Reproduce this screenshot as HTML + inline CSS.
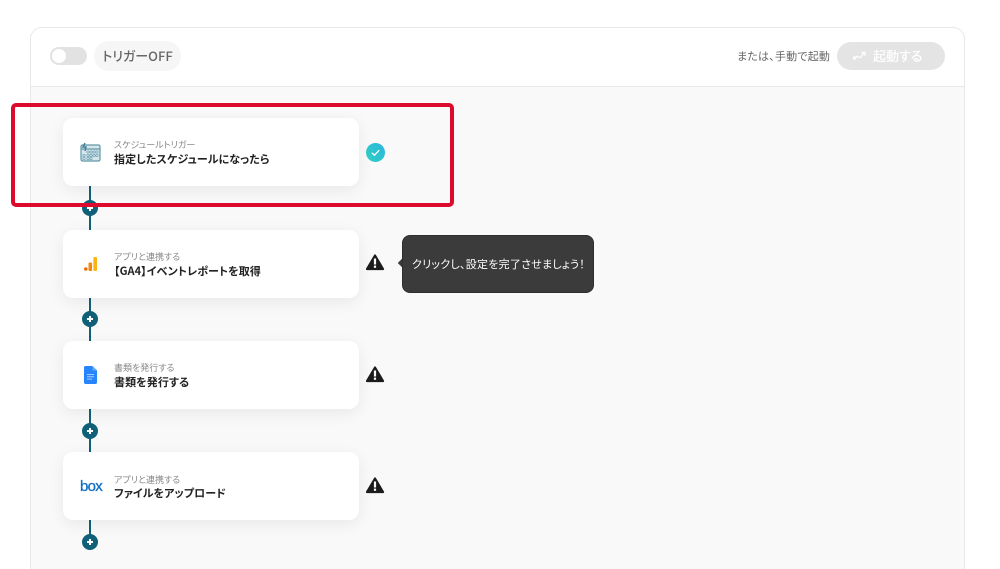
<!DOCTYPE html>
<html lang="ja">
<head>
<meta charset="utf-8">
<title>Flow</title>
<style>
*{box-sizing:border-box;margin:0;padding:0}
html,body{width:1000px;height:569px;overflow:hidden;background:#fff}
body{position:relative;font-family:"Noto Sans CJK JP","Liberation Sans",sans-serif;font-feature-settings:"palt"}
.abs{position:absolute}
.panel{left:30px;top:27px;width:935px;height:560px;border:1px solid #e8e8e8;border-radius:12px;background:#f9f9f9;overflow:hidden}
.head{left:0;top:0;width:933px;height:59px;background:#fff;border-bottom:1px solid #e8e8e8}
.toggle{left:50px;top:47px;width:37px;height:18px;border-radius:9px;background:#e2e2e2}
.knob{left:52px;top:49px;width:14px;height:14px;border-radius:50%;background:#fff}
.chip{left:94px;top:41px;width:87px;height:30px;border-radius:15px;background:#f6f6f6;color:#666;font-size:13px;font-weight:500;line-height:30px;text-align:center;white-space:nowrap}
.manual{left:737px;top:47px;font-size:11px;letter-spacing:.2px;line-height:18px;color:#666;white-space:nowrap}
.btn{left:837px;top:42px;width:108px;height:28px;border-radius:14px;background:#e4e4e4}
.btnt{left:873px;top:47px;font-size:13px;line-height:18px;color:#fff;font-weight:500;white-space:nowrap}
.line{left:89px;width:2px;background:#0f6078}
.plus{left:82px;width:16px;height:16px;border-radius:50%;background:#0f6078}
.plus:before{content:"";position:absolute;left:5px;top:7.250px;width:6px;height:1.500px;background:#fff}
.plus:after{content:"";position:absolute;left:7.250px;top:5px;width:1.500px;height:6px;background:#fff}
.card{left:63px;width:296px;height:68px;border-radius:10px;background:#fff;box-shadow:0 4px 16px rgba(0,0,0,.07)}
.sub{left:114px;font-size:9px;line-height:12px;color:#888;white-space:nowrap;margin-top:.5px}
.title{left:114px;font-size:11px;letter-spacing:.08px;line-height:16px;color:#222;font-weight:700;white-space:nowrap}
.red{left:11px;top:103px;width:443px;height:104px;border:4px solid #dc0a2d;border-radius:5px}
.tip{left:402px;top:235px;width:192px;height:58px;border-radius:8px;background:#3b3b3b;color:#fff;font-size:11px;letter-spacing:.25px;line-height:56px;padding-left:9px;white-space:nowrap;border:1px solid #2e2e2e}
.arrow{left:399px;top:260px;width:6px;height:6px;background:#3b3b3b;transform:rotate(45deg)}
.box{left:80px;top:477px;font-family:"Liberation Sans",sans-serif;font-size:15px;line-height:20px;color:#0f6fc6;letter-spacing:-.7px;-webkit-text-stroke:.3px #0f6fc6;white-space:nowrap}
</style>
</head>
<body>
<div class="abs panel"><div class="abs head"></div></div>

<div class="abs toggle"></div><div class="abs knob"></div>
<div class="abs chip">トリガーOFF</div>
<div class="abs manual">または、手動で起動</div>
<div class="abs btn"></div>
<svg class="abs" style="left:852px;top:49px" width="15" height="13" viewBox="0 0 15 13" fill="none" stroke="#fff" stroke-width="1.2"><circle cx="2.500" cy="9" r="1.200"/><path d="M4 8.500C6 5.500 7 10.500 9 8L12 4"/><path d="M9.500 3.500H13V7"/></svg>
<div class="abs btnt">起動する</div>

<div class="abs line" style="top:186px;height:44px"></div>
<div class="abs line" style="top:297px;height:44px"></div>
<div class="abs line" style="top:409px;height:44px"></div>
<div class="abs line" style="top:520px;height:20px"></div>
<div class="abs plus" style="top:200px"></div>
<div class="abs plus" style="top:311px"></div>
<div class="abs plus" style="top:423px"></div>
<div class="abs plus" style="top:534px"></div>

<div class="abs card" style="top:118px"></div>
<div class="abs card" style="top:230px"></div>
<div class="abs card" style="top:341px"></div>
<div class="abs card" style="top:452px"></div>

<svg class="abs" style="left:80px;top:142px" width="21" height="20" viewBox="0 0 21 20" fill="none">
<rect x="1" y="3" width="19" height="16" rx="1.500" fill="#d6e6eb" stroke="#5f97a8" stroke-width="1.200"/>
<path d="M1 7H20" stroke="#5f97a8" stroke-width="1.200"/>
<path d="M5 1L3 5H6L5 9" stroke="#3d7f93" stroke-width="1.400"/>
<g fill="none" stroke="#6fa2b2" stroke-width=".7"><circle cx="8" cy="10" r="1.200"/><circle cx="11" cy="10" r="1.200"/><circle cx="14" cy="10" r="1.200"/><circle cx="17" cy="10" r="1.200"/><circle cx="4" cy="13.500" r="1.200"/><circle cx="8" cy="13.500" r="1.200"/><circle cx="11" cy="13.500" r="1.200"/><circle cx="14" cy="13.500" r="1.200"/><circle cx="17" cy="13.500" r="1.200"/><circle cx="4" cy="16.500" r="1.200"/><circle cx="8" cy="16.500" r="1.200"/><circle cx="11" cy="16.500" r="1.200"/></g>
</svg>
<div class="abs sub" style="top:138px">スケジュールトリガー</div>
<div class="abs title" style="top:151px">指定したスケジュールになったら</div>

<svg class="abs" style="left:84px;top:257px" width="13" height="14" viewBox="0 0 13 14">
<circle cx="1.800" cy="12" r="1.800" fill="#e8710a"/>
<rect x="4.500" y="5.500" width="3.600" height="8.500" rx="1" fill="#ee8a10"/>
<rect x="9.400" y="0" width="3.600" height="14" rx="1" fill="#fbb416"/>
</svg>
<div class="abs sub" style="top:250px">アプリと連携する</div>
<div class="abs title" style="top:263px">【GA4】イベントレポートを取得</div>

<svg class="abs" style="left:84px;top:366px" width="13" height="18" viewBox="0 0 13 18">
<path d="M1.500 0H8.500L13 4.500V16.500C13 17.300 12.300 18 11.500 18H1.500C.7 18 0 17.300 0 16.500V1.500C0 .7.7 0 1.500 0Z" fill="#2684fc"/>
<path d="M8.500 0L13 4.500H8.500Z" fill="#6aa8f8"/>
<path d="M3 8.500H10M3 10.800H10M3 13.100H8" stroke="#a9cbfb" stroke-width="1"/>
</svg>
<div class="abs sub" style="top:361px">書類を発行する</div>
<div class="abs title" style="top:374px">書類を発行する</div>

<div class="abs box">box</div>
<div class="abs sub" style="top:473px">アプリと連携する</div>
<div class="abs title" style="top:485px">ファイルをアップロード</div>

<svg class="abs" style="left:366px;top:143px" width="19" height="19" viewBox="0 0 19 19">
<defs><linearGradient id="g" x1="0" y1="1" x2="1" y2="0"><stop offset="0" stop-color="#2fd0c0"/><stop offset="1" stop-color="#2ab5e0"/></linearGradient></defs>
<circle cx="9.500" cy="9.500" r="9.500" fill="url(#g)"/>
<path d="M5.800 9.800L8.400 12.200L13.200 7.200" fill="none" stroke="#fff" stroke-width="1.300"/>
</svg>

<svg class="abs" style="left:365px;top:253px" width="20" height="18" viewBox="0 0 20 18"><path d="M10 2.500L18 16H2Z" fill="#1c1c1c" stroke="#1c1c1c" stroke-width="2.200" stroke-linejoin="round"/><rect x="8.900" y="5.500" width="2.200" height="6" fill="#fff"/><rect x="8.900" y="12.600" width="2.200" height="2.200" fill="#fff"/></svg>
<svg class="abs" style="left:365px;top:365px" width="20" height="18" viewBox="0 0 20 18"><path d="M10 2.500L18 16H2Z" fill="#1c1c1c" stroke="#1c1c1c" stroke-width="2.200" stroke-linejoin="round"/><rect x="8.900" y="5.500" width="2.200" height="6" fill="#fff"/><rect x="8.900" y="12.600" width="2.200" height="2.200" fill="#fff"/></svg>
<svg class="abs" style="left:365px;top:476px" width="20" height="18" viewBox="0 0 20 18"><path d="M10 2.500L18 16H2Z" fill="#1c1c1c" stroke="#1c1c1c" stroke-width="2.200" stroke-linejoin="round"/><rect x="8.900" y="5.500" width="2.200" height="6" fill="#fff"/><rect x="8.900" y="12.600" width="2.200" height="2.200" fill="#fff"/></svg>

<div class="abs arrow"></div>
<div class="abs tip">クリックし、設定を完了させましょう！</div>

<div class="abs red"></div>
</body>
</html>
